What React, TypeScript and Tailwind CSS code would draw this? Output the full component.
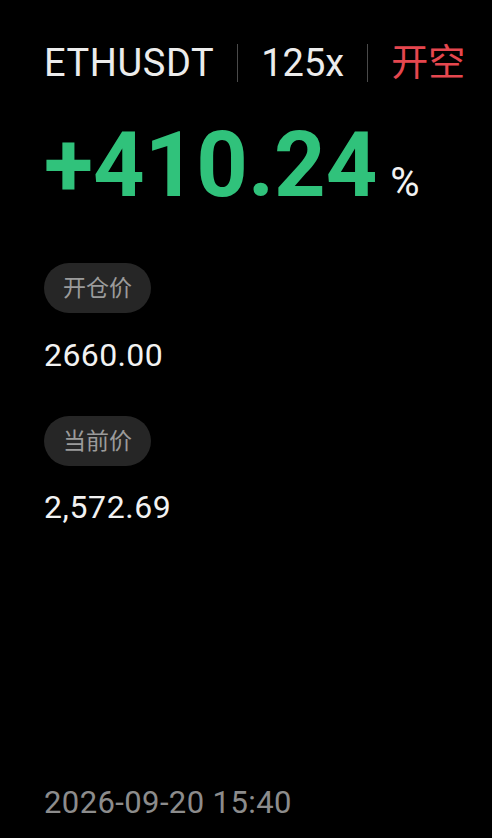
import React from 'react';

const sans = { fontFamily: 'Roboto, "Noto Sans CJK SC", sans-serif' };

const Pill: React.FC<{ label: string }> = ({ label }) => (
  <div className="flex h-[50px] w-fit items-center rounded-full bg-[#262626] px-[19px] text-[23px] leading-none text-[#9b9b9b]">
    {label}
  </div>
);

export default function App() {
  return (
    <div className="flex h-[838px] w-full flex-col bg-black pl-[44px]" style={sans}>
      {/* header */}
      <div className="mt-[44px] flex h-[38px] items-center gap-[23px] text-[38px] leading-none text-[#ececec]">
        <span className="tracking-[0.6px]">ETHUSDT</span>
        <span className="h-[38px] w-px bg-[#4a4a4a]" />
        <span>125x</span>
        <span className="h-[38px] w-px bg-[#4a4a4a]" />
        <span className="text-[37px] text-[#e5474f]">开空</span>
      </div>

      {/* pnl */}
      <div className="mt-[39px] flex items-baseline leading-none">
        <span className="text-[90px] font-bold text-[#30c27b]">+410.24</span>
        <span className="ml-[13px] text-[40px] text-[#f2f2f2]">%</span>
      </div>

      <div className="mt-[52px]">
        <Pill label="开仓价" />
      </div>
      <div className="mt-[26px] text-[32px] leading-none tracking-[0.4px] text-[#f2f2f2]">2660.00</div>

      <div className="mt-[45px]">
        <Pill label="当前价" />
      </div>
      <div className="mt-[25px] text-[32px] leading-none tracking-[0.6px] text-[#f2f2f2]">2,572.69</div>

      <div className="mt-auto pb-[20px] text-[31px] leading-none tracking-[0.4px] text-[#8c8c8c]">2026-09-20 15:40</div>
    </div>
  );
}
